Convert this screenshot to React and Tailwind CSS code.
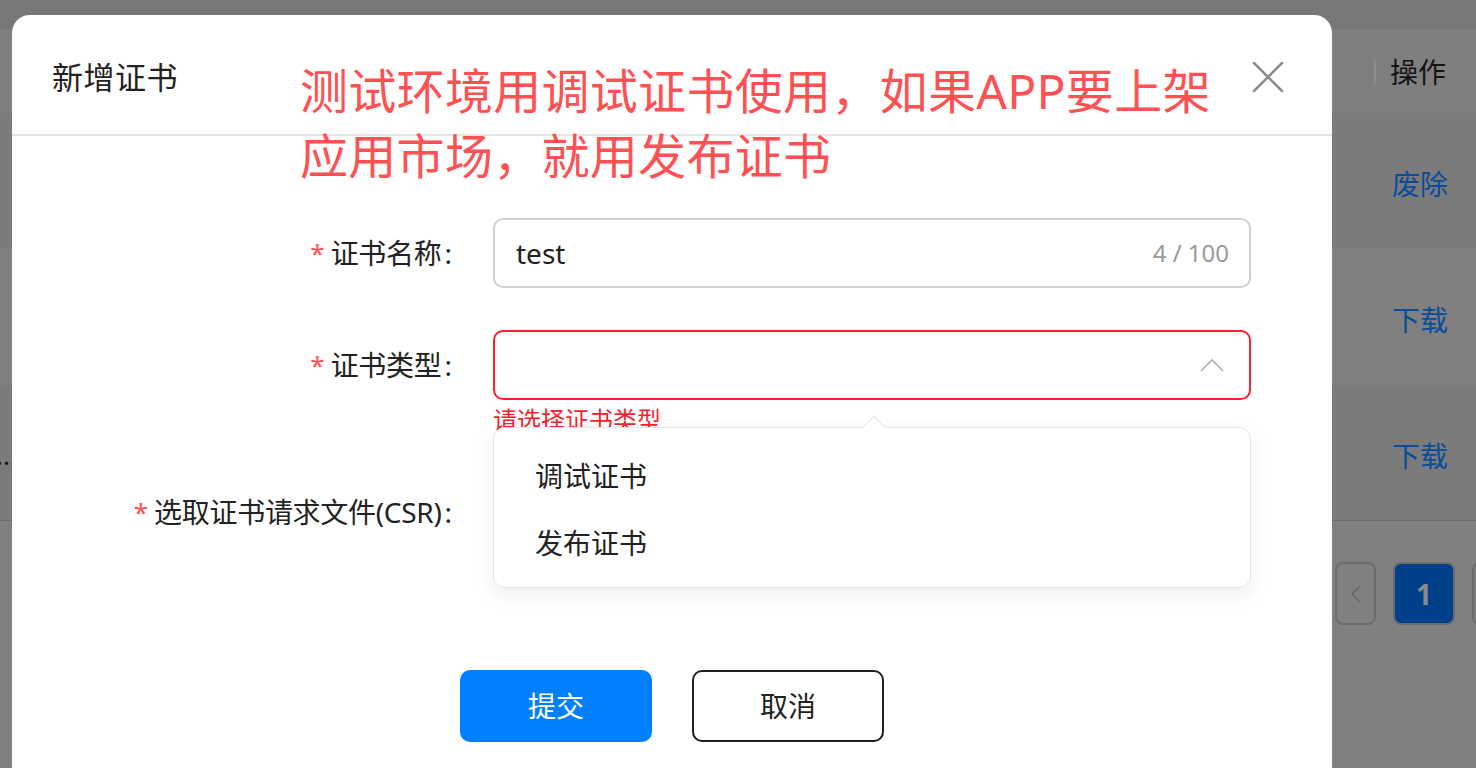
import React, { useState } from 'react';

const font = { fontFamily: '"Noto Sans", "Noto Sans CJK SC", sans-serif' };

const FormLabel = ({ text }) => (
  <div className="w-[440px] shrink-0 flex justify-end items-center text-[28px] text-[#222]">
    <span className="text-[#ff4d4f] text-[26px] mr-[6px] leading-none">*</span>
    <span className="tracking-[-0.3px]">{text}</span>
    <span className="ml-[3px]">:</span>
  </div>
);

const Background = () => (
  <div className="flex flex-col w-full">
    <div className="h-[30px] bg-[#787878]"></div>
    <div className="h-[83px] bg-[#7f7f7f] flex items-center justify-end">
      <div className="w-[102px] flex items-center">
        <div className="w-[2px] h-[24px] bg-[#8e8e8e]"></div>
        <span className="ml-[14px] text-[28px] text-[#141414]">操作</span>
      </div>
    </div>
    <div className="h-[135px] bg-[#7b7b7b] flex items-center justify-end pt-[6px]">
      <div className="w-[84px] text-[28px] text-[#0a4c9c]">废除</div>
    </div>
    <div className="h-[137px] bg-[#808080] flex items-center justify-end pt-[6px]">
      <div className="w-[84px] text-[28px] text-[#0a4c9c]">下载</div>
    </div>
    <div className="h-[135px] bg-[#7b7b7b] flex items-center justify-between pt-[6px]">
      <span className="-ml-[4px] text-[26px] text-[#141414]">...</span>
      <div className="w-[84px] text-[28px] text-[#0a4c9c]">下载</div>
    </div>
    <div className="h-[1px] bg-[#6e6e6e]"></div>
    <div className="h-[300px] bg-[#808080] flex justify-end pt-[41px]">
      <div className="flex gap-[17px] -mr-[58px]">
        <div className="w-[41px] h-[63px] rounded-[8px] border-2 border-[#6c6c6c] flex items-center justify-center">
          <svg width="12" height="20" viewBox="0 0 12 20" fill="none">
            <polyline points="10,2 2,10 10,18" stroke="#666" strokeWidth="1.5" />
          </svg>
        </div>
        <div className="w-[62px] h-[63px] rounded-[8px] border-2 border-[#6c6c6c] bg-[#00408a] flex items-center justify-center text-[28px] font-bold text-[#8a8a8a]">
          1
        </div>
        <div className="w-[62px] h-[63px] rounded-[8px] border-2 border-[#6c6c6c]"></div>
      </div>
    </div>
  </div>
);

const App = () => {
  const [name] = useState('test');
  const options = ['调试证书', '发布证书'];

  return (
    <div className="relative w-full h-[768px] overflow-hidden bg-[#808080]" style={font}>
      <Background />

      {/* dialog */}
      <div className="absolute left-[12px] top-[15px] w-[1320px] h-[800px] bg-white rounded-[18px] flex flex-col">
        <div className="h-[121px] shrink-0 border-b-2 border-[#e6e6e6] flex items-center justify-between pl-[40px] pr-[48px] pt-[5px]">
          <span className="text-[31px] text-[#222] tracking-[0.5px]">新增证书</span>
          <svg width="32" height="32" viewBox="0 0 32 32" fill="none">
            <path d="M2 2 L30 30 M30 2 L2 30" stroke="#8c8c8c" strokeWidth="2.5" strokeLinecap="round" />
          </svg>
        </div>

        <div className="flex flex-col pt-[82px]">
          <div className="flex items-center h-[70px]">
            <FormLabel text="证书名称" />
            <div className="ml-[41px] w-[758px] h-[70px] rounded-[10px] border-2 border-[#cfcfcf] flex items-center justify-between pl-[21px] pr-[20px]">
              <span className="text-[28px] text-[#222]">{name}</span>
              <span className="text-[24px] text-[#999]">{name.length} / 100</span>
            </div>
          </div>

          <div className="flex mt-[42px]">
            <div className="h-[70px] flex items-center">
              <FormLabel text="证书类型" />
            </div>
            <div className="ml-[41px] w-[758px] relative">
              <div className="h-[70px] rounded-[10px] border-2 border-[#f5222d] flex items-center justify-end pr-[25px]">
                <svg width="24" height="14" viewBox="0 0 24 14" fill="none">
                  <polyline points="1,13 12,2 23,13" stroke="#b0b0b0" strokeWidth="1.6" />
                </svg>
              </div>
              <div className="h-[30px] text-[24px] leading-[30px] text-[#f5222d] mt-[5px]">请选择证书类型</div>

              <div className="absolute left-0 top-[97px] w-[758px] h-[161px] z-10 bg-white rounded-[12px] border border-[#e3e6eb] shadow-[0_6px_20px_rgba(0,0,0,0.08)] flex flex-col pt-[14px]">
                <div className="absolute left-[372px] -top-[9px] w-[16px] h-[16px] bg-white rotate-45 border-l border-t border-[#e3e6eb]"></div>
                {options.map((opt) => (
                  <div key={opt} className="h-[67px] flex items-center pl-[41px] text-[28px] text-[#222] relative">
                    {opt}
                  </div>
                ))}
              </div>
            </div>
          </div>

          <div className="flex items-center h-[70px] mt-[42px]">
            <FormLabel text="选取证书请求文件(CSR)" />
          </div>

          <div className="flex gap-[40px] mt-[123px] pl-[448px]">
            <button className="w-[192px] h-[72px] rounded-[10px] bg-[#0080ff] text-white text-[28px]">提交</button>
            <button className="w-[192px] h-[72px] rounded-[10px] border-2 border-[#1f1f1f] bg-white text-[#222] text-[28px]">取消</button>
          </div>
        </div>
      </div>

      {/* annotation on top of the screenshot */}
      <div className="absolute left-[300px] top-[58px] text-[48px] leading-[65px] text-[#fd5153] whitespace-nowrap z-20 tracking-[0.3px]">
        测试环境用调试证书使用，如果APP要上架
        <br />
        应用市场，就用发布证书
      </div>
    </div>
  );
};

export default App;
